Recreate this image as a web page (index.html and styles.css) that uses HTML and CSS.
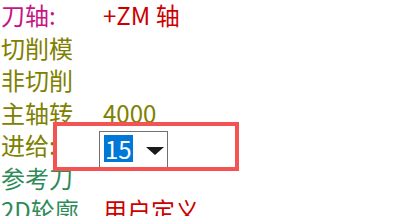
FILE: index.html
```html
<!DOCTYPE html>
<html lang="zh-CN">

<head>
    <meta charset="UTF-8">
    <title>刀轴</title>
    <link rel="stylesheet" href="styles.css">
</head>

<body>
    <div class="panel">
        <div class="row">
            <div class="label axis">刀轴:</div>
            <div class="value red">+ZM 轴</div>
        </div>
        <div class="row">
            <div class="label olive">切削模</div>
            <div class="value"></div>
        </div>
        <div class="row">
            <div class="label olive">非切削</div>
            <div class="value"></div>
        </div>
        <div class="row">
            <div class="label olive">主轴转</div>
            <div class="value olive">4000</div>
        </div>
        <div class="row">
            <div class="label olive">进给:</div>
            <div class="value">
                <div class="combo">
                    <span class="combo-text">15</span>
                    <span class="combo-arrow"></span>
                </div>
            </div>
        </div>
        <div class="row">
            <div class="label green">参考刀</div>
            <div class="value"></div>
        </div>
        <div class="row">
            <div class="label green">2D轮廓</div>
            <div class="value red">用户定义</div>
        </div>
        <!-- рамка выделения поверх строки -->
        <div class="highlight"></div>
    </div>
</body>

</html>
```

FILE: styles.css
```css
html,
body {
    height: 216px;
    overflow: hidden;
}

body {
    margin: 0;
    background-color: #ffffff;
    font-family: "Noto Sans CJK SC", "Noto Sans", sans-serif;
    font-size: 24px;
}

.panel {
    position: relative;
    margin-top: -2px;
    padding-left: 1px;
}

.row {
    display: flex;
    height: 32.5px;
    line-height: 33px;
    white-space: nowrap;
}

.label {
    width: 102px;
}

.value {
    position: relative;
}

.axis {
    color: #c71585;
}

.red {
    color: #cc0000;
}

.olive {
    color: #808000;
}

.green {
    color: #2e8b57;
}

.combo {
    display: flex;
    align-items: flex-start;
    box-sizing: border-box;
    width: 69px;
    height: 39px;
    margin-top: 3px;
    margin-left: -4px;
    padding: 3px 0 0 4px;
    border: 1px solid #707070;
    background-color: #ffffff;
}

.combo-text {
    display: inline-block;
    height: 27px;
    line-height: 27px;
    padding: 0 1px;
    background-color: #0078d7;
    color: #ffffff;
}

.combo-arrow {
    width: 0;
    height: 0;
    margin-top: 12px;
    margin-left: 13px;
    border-left: 9px solid transparent;
    border-right: 9px solid transparent;
    border-top: 8px solid #1a1a1a;
}

.highlight {
    position: absolute;
    left: 53px;
    top: 124px;
    width: 178px;
    height: 41px;
    border: 4px solid #f55353;
}
```
